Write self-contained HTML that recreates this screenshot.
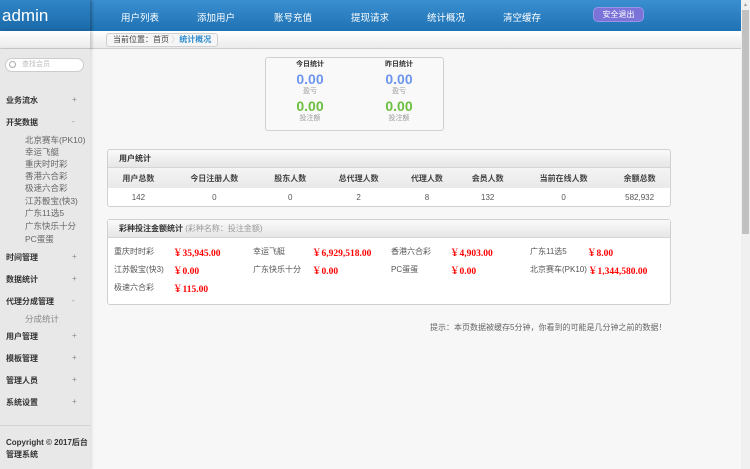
<!DOCTYPE html>
<html><head><meta charset="utf-8"><style>
*{margin:0;padding:0;box-sizing:border-box}
body{width:750px;height:469px;overflow:hidden;background:#f7f7f7;font-family:"Liberation Sans","Noto Sans CJK SC",sans-serif;font-size:8px;color:#555;position:relative}
.a{position:absolute;white-space:nowrap}
#top{left:0;top:0;width:741px;height:31px;background:linear-gradient(#3a8fd0,#1f72b4)}
#logo{left:0;top:0;width:90px;height:31px;background:linear-gradient(#2f85c7,#1b6aa9);color:#fff;font-size:17px;line-height:31px;padding-left:2px;box-shadow:2px 0 3px rgba(0,0,0,.3)}
.nav{top:10px;color:#fff;font-size:9.5px;transform:translateX(-50%)}
#exit{left:593px;top:7px;width:51px;height:15px;border-radius:5px;background:#7b73d8;border:1px solid #9a94e6;color:#fff;font-size:8px;text-align:center;line-height:13px}
#bc{left:0;top:31px;width:741px;height:18px;background:linear-gradient(#fff,#ebebeb);border-bottom:1px solid #ccc}
#crumb{left:106px;top:33px;height:14px;width:112px;border:1px solid #d0d0d0;border-radius:3px;background:#f6f6f6;font-size:8px;line-height:12px;padding-left:6px;color:#444}
#side{left:0;top:49px;width:90px;height:420px;background:#e8e8e8;box-shadow:2px 0 3px rgba(0,0,0,.1)}
#search{left:5px;top:58px;width:79px;height:14px;border:1px solid #ccc;border-radius:7px;background:#fff;color:#bbb;font-size:7px;line-height:12px;padding-left:16px}
.m{left:6px;font-weight:bold;color:#333;font-size:8px}
.p{left:72px;color:#888;font-size:8px}
.s{left:25px;color:#666;font-size:8.5px}
.box{background:#fff;border:1px solid #d0d0d0;border-radius:3px}
.ph{background:linear-gradient(#fafafa,#e6e6e6);border-bottom:1px solid #d6d6d6;height:18px;line-height:18px;padding-left:11px;font-weight:bold;color:#333}
.blue{color:#6d95ee;font-size:14px;font-weight:bold}
.green{color:#6abf3e;font-size:14px;font-weight:bold}
.red{color:#f00;font-weight:bold;font-family:"Liberation Serif","Noto Serif CJK SC",serif;font-size:9.5px}
.c{font-size:8px}
</style></head><body>
<div class="a" id="top"></div>
<div class="a" id="logo">admin</div>
<div class="a nav" style="left:140px">用户列表</div>
<div class="a nav" style="left:216px">添加用户</div>
<div class="a nav" style="left:293px">账号充值</div>
<div class="a nav" style="left:370px">提现请求</div>
<div class="a nav" style="left:446px">统计概况</div>
<div class="a nav" style="left:522px">清空缓存</div>
<div class="a" id="exit">安全退出</div>
<div class="a" id="bc"></div>
<div class="a" style="left:0;top:31px;width:90px;height:18px;background:linear-gradient(#fff,#ebebeb);border-bottom:1px solid #ccc;box-shadow:2px 0 3px rgba(0,0,0,.2)"></div>
<div class="a" id="crumb">当前位置：首页 <span style="color:#ccc">〉</span><span style="color:#2d8ccf;font-weight:bold">统计概况</span></div>
<div class="a" id="side"></div>
<div class="a" id="search">查找会员</div>
<div class="a" style="left:9px;top:61px;width:7px;height:7px;border:1px solid #aaa;border-radius:50%"></div>
<div class="a m" style="top:95px">业务流水</div><div class="a p" style="top:95px">+</div>
<div class="a m" style="top:117px">开奖数据</div><div class="a p" style="top:117px">-</div>
<div class="a s" style="top:134px">北京赛车(PK10)</div>
<div class="a s" style="top:146px">幸运飞艇</div>
<div class="a s" style="top:158px">重庆时时彩</div>
<div class="a s" style="top:170px">香港六合彩</div>
<div class="a s" style="top:182px">极速六合彩</div>
<div class="a s" style="top:195px">江苏骰宝(快3)</div>
<div class="a s" style="top:207px">广东11选5</div>
<div class="a s" style="top:220px">广东快乐十分</div>
<div class="a s" style="top:233px">PC蛋蛋</div>
<div class="a m" style="top:252px">时间管理</div><div class="a p" style="top:252px">+</div>
<div class="a m" style="top:274px">数据统计</div><div class="a p" style="top:274px">+</div>
<div class="a m" style="top:296px">代理分成管理</div><div class="a p" style="top:296px">-</div>
<div class="a s" style="top:313px;color:#888">分成统计</div>
<div class="a m" style="top:331px">用户管理</div><div class="a p" style="top:331px">+</div>
<div class="a m" style="top:353px">模板管理</div><div class="a p" style="top:353px">+</div>
<div class="a m" style="top:375px">管理人员</div><div class="a p" style="top:375px">+</div>
<div class="a m" style="top:397px">系统设置</div><div class="a p" style="top:397px">+</div>
<div class="a" style="left:0;top:425px;width:90px;border-top:1px solid #d4d4d4"></div>
<div class="a m" style="top:437px;line-height:12px;white-space:normal;width:84px">Copyright © 2017后台管理系统</div>

<div class="a box" style="left:265px;top:57px;width:179px;height:74px;background:#f9f9f9"></div>
<div class="a" style="left:310px;top:61px;transform:translateX(-50%);text-align:center;line-height:1">
<div style="font-weight:bold;color:#333;font-size:7px;margin-bottom:4px">今日统计</div><div class="blue">0.00</div><div style="color:#999;font-size:7px;margin:2px 0 4px">盈亏</div><div class="green">0.00</div><div style="color:#999;font-size:7px;margin-top:2px">投注额</div></div>
<div class="a" style="left:399px;top:61px;transform:translateX(-50%);text-align:center;line-height:1">
<div style="font-weight:bold;color:#333;font-size:7px;margin-bottom:4px">昨日统计</div><div class="blue">0.00</div><div style="color:#999;font-size:7px;margin:2px 0 4px">盈亏</div><div class="green">0.00</div><div style="color:#999;font-size:7px;margin-top:2px">投注额</div></div>

<div class="a box" style="left:107px;top:149px;width:564px;height:58px;overflow:hidden">
<div class="ph">用户统计</div>
<table style="width:100%;border-collapse:collapse;text-align:center;font-size:8px">
<tr style="height:20px;background:linear-gradient(#f4f4f4,#e9e9e9);color:#444;font-weight:bold"><td>用户总数</td><td>今日注册人数</td><td>股东人数</td><td>总代理人数</td><td>代理人数</td><td>会员人数</td><td>当前在线人数</td><td>余额总数</td></tr>
<tr style="height:19px;color:#555"><td>142</td><td>0</td><td>0</td><td>2</td><td>8</td><td>132</td><td>0</td><td>582,932</td></tr></table></div>

<div class="a box" style="left:107px;top:219px;width:564px;height:86px">
<div class="ph">彩种投注金额统计 <span style="font-weight:normal;color:#999">(彩种名称：投注金额)</span></div></div>
<div class="a c" style="left:114px;top:246px">重庆时时彩</div><div class="a red" style="left:173px;top:245px">￥35,945.00</div>
<div class="a c" style="left:253px;top:246px">幸运飞艇</div><div class="a red" style="left:312px;top:245px">￥6,929,518.00</div>
<div class="a c" style="left:391px;top:246px">香港六合彩</div><div class="a red" style="left:450px;top:245px">￥4,903.00</div>
<div class="a c" style="left:530px;top:246px">广东11选5</div><div class="a red" style="left:587px;top:245px">￥8.00</div>
<div class="a c" style="left:114px;top:264px">江苏骰宝(快3)</div><div class="a red" style="left:173px;top:263px">￥0.00</div>
<div class="a c" style="left:253px;top:264px">广东快乐十分</div><div class="a red" style="left:312px;top:263px">￥0.00</div>
<div class="a c" style="left:391px;top:264px">PC蛋蛋</div><div class="a red" style="left:450px;top:263px">￥0.00</div>
<div class="a c" style="left:530px;top:264px">北京赛车(PK10)</div><div class="a red" style="left:588px;top:263px">￥1,344,580.00</div>
<div class="a c" style="left:114px;top:282px">极速六合彩</div><div class="a red" style="left:173px;top:281px">￥115.00</div>

<div class="a" style="left:430px;top:322px;color:#666;font-size:8px">提示：本页数据被缓存5分钟，你看到的可能是几分钟之前的数据！</div>

<div class="a" style="left:741px;top:0;width:9px;height:469px;background:#f0f0f0"></div>
<div class="a" style="left:742px;top:10px;width:7px;height:224px;background:#c1c1c1"></div>
<div class="a" style="left:743px;top:2px;color:#999;font-size:5px">▲</div>
</body></html>
